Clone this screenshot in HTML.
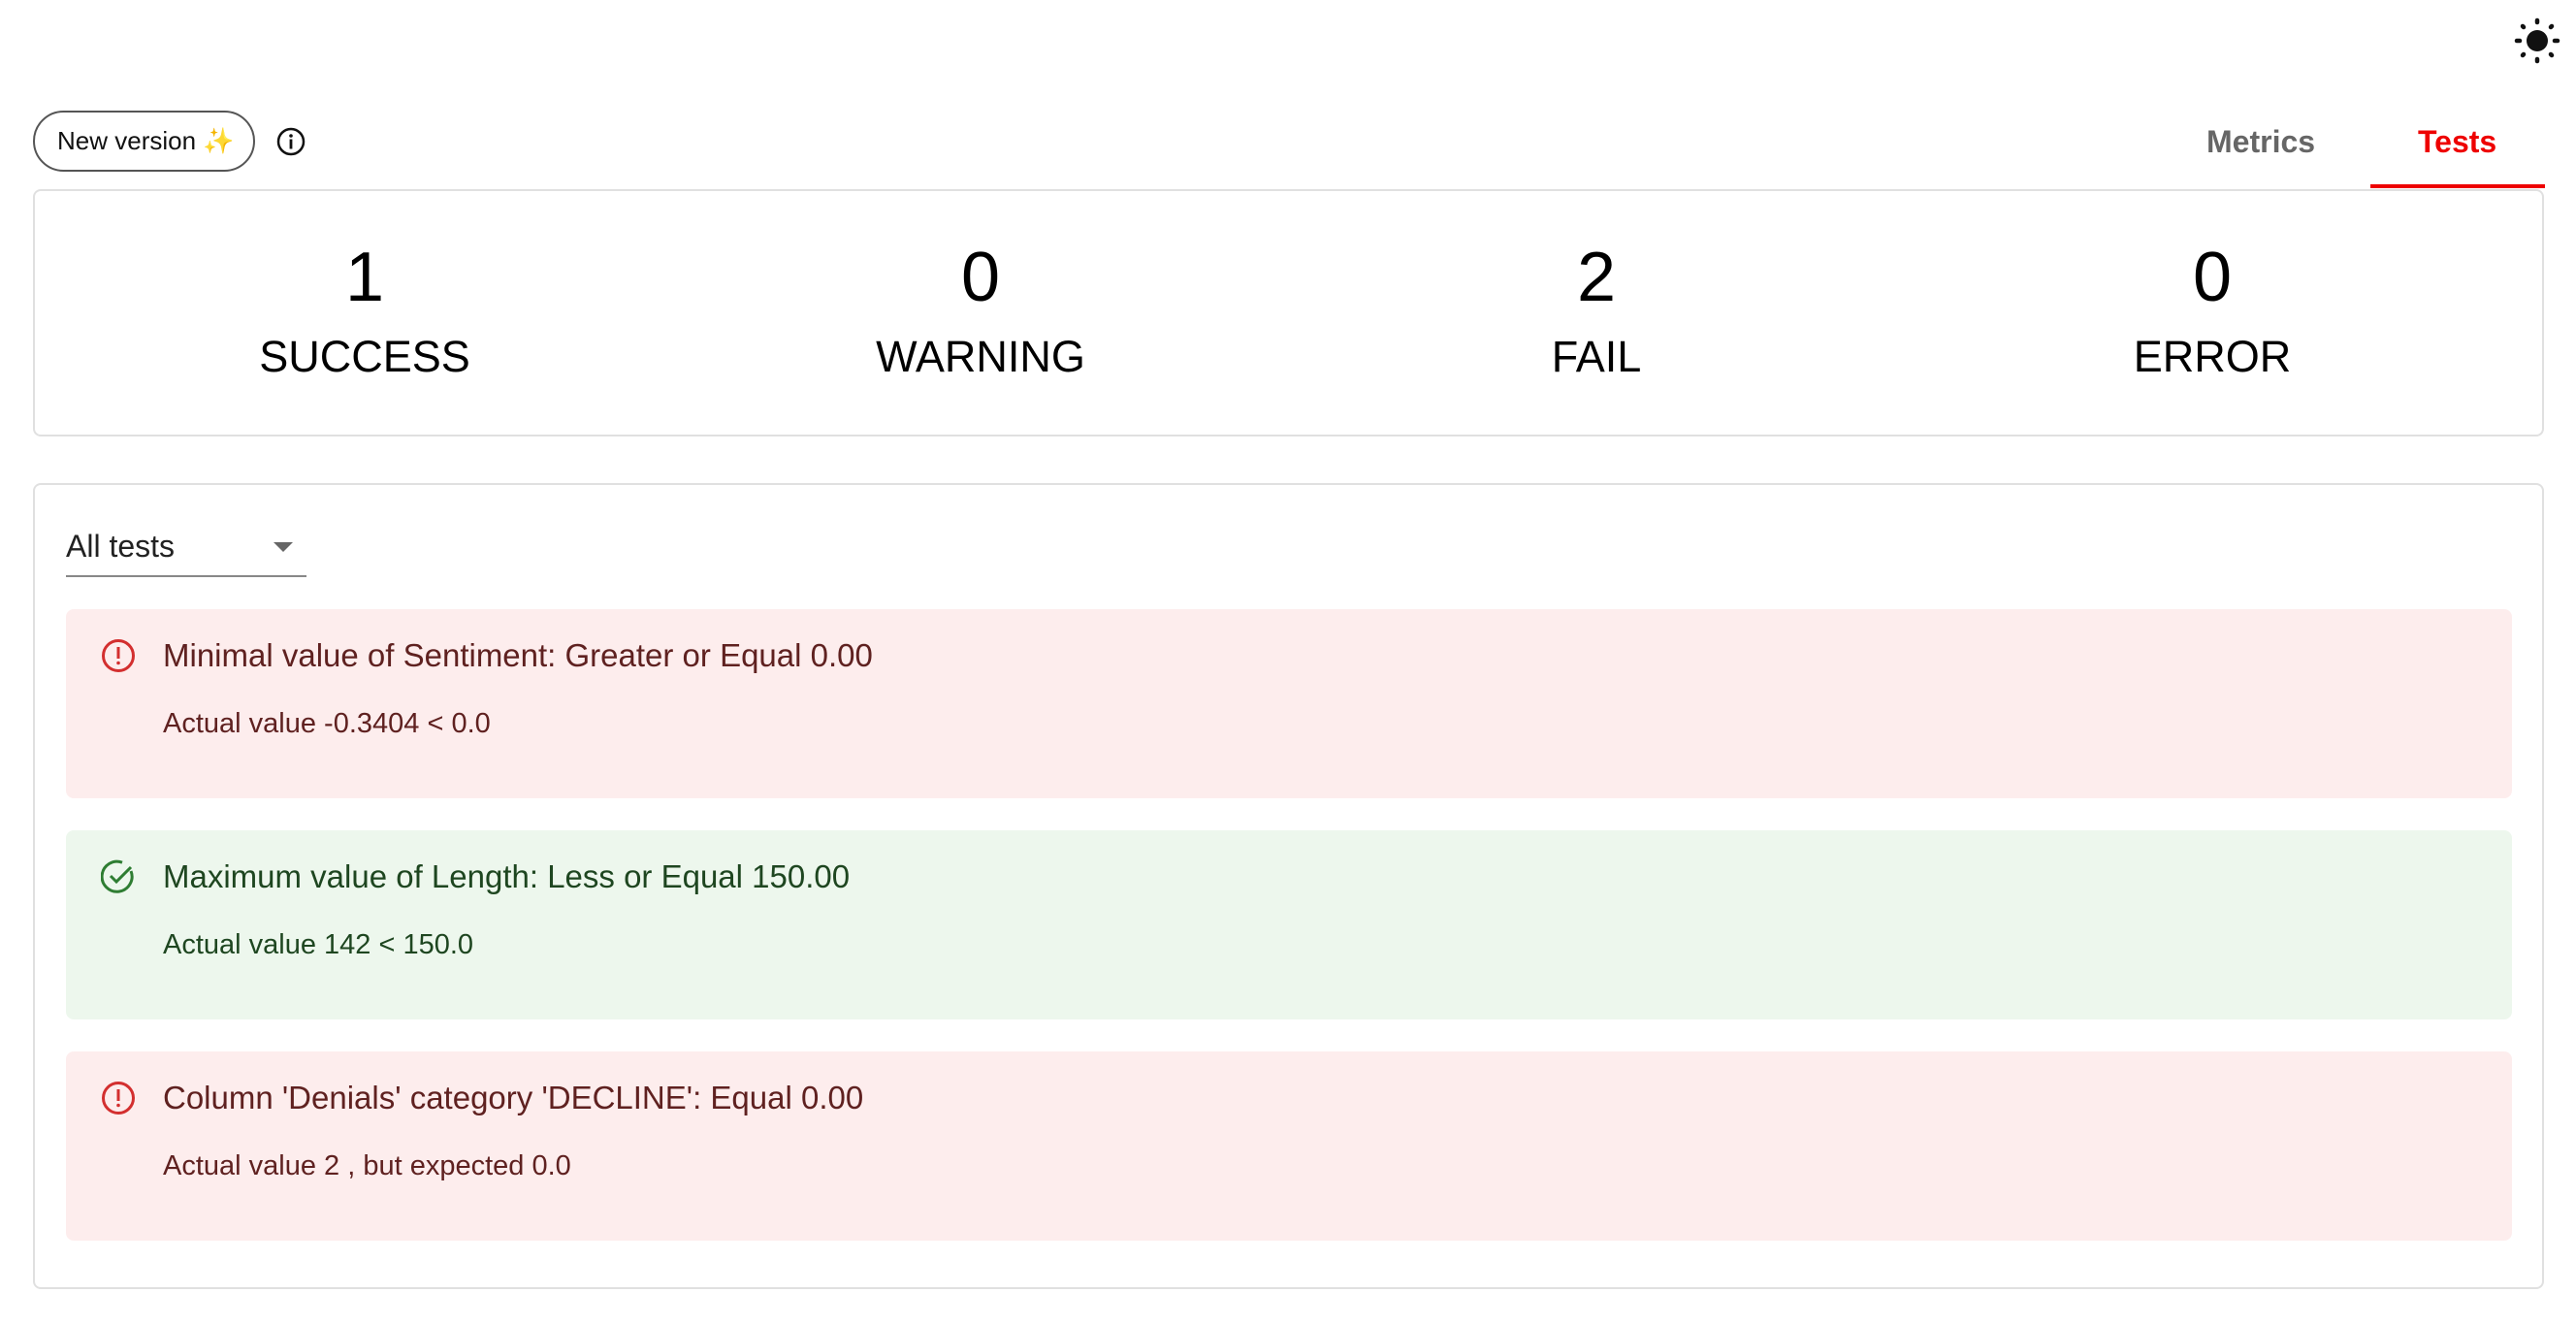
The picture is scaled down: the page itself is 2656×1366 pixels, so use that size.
<!DOCTYPE html>
<html><head><meta charset="utf-8"><style>
*{box-sizing:border-box;margin:0;padding:0}
body{width:2656px;height:1366px;background:#fff;font-family:"Liberation Sans",Arial,sans-serif;position:relative;overflow:hidden;color:#000}
.abs{position:absolute}
.btn{left:34px;top:114px;width:229px;height:63px;border:2px solid #555;border-radius:32px;font-size:26px;line-height:59px;padding-left:23px;color:#111}
.card{border:2px solid #e0e0e0;border-radius:8px;left:34px;width:2589px}
.stat{position:absolute;width:400px;margin-left:-200px;text-align:center}
.num{font-size:72px;top:245px}
.lbl{font-size:45px;top:342px}
.alert{position:absolute;left:68px;width:2522px;height:195px;border-radius:8px}
.alert .t{position:absolute;left:100px;top:29px;font-size:33px}
.alert .s{position:absolute;left:100px;top:102px;font-size:29px}
.alert svg{position:absolute;left:36px;top:30px}
.r{background:#fdeded;color:#5f2120}
.g{background:#edf7ed;color:#1e4620}
</style></head><body>
<svg class="abs" style="left:2592px;top:18px" width="48" height="48" viewBox="0 0 48 48"><circle cx="24" cy="24" r="11" fill="#111"/><g stroke="#111" stroke-width="4.5" stroke-linecap="round"><line x1="24" y1="3" x2="24" y2="5"/><line x1="24" y1="43" x2="24" y2="45"/><line x1="3" y1="24" x2="6" y2="24"/><line x1="42" y1="24" x2="45" y2="24"/><line x1="9" y1="9" x2="10" y2="10"/><line x1="38" y1="38" x2="39" y2="39"/><line x1="9" y1="39" x2="10" y2="38"/><line x1="38" y1="10" x2="39" y2="9"/></g></svg>
<div class="abs btn">New version <span style="color:#f5c518">✨</span></div>
<svg class="abs" style="left:285px;top:131px" width="30" height="30" viewBox="0 0 30 30"><circle cx="15" cy="15" r="13" fill="none" stroke="#111" stroke-width="2.5"/><circle cx="15" cy="9" r="1.8" fill="#111"/><rect x="13.6" y="12.5" width="2.8" height="10" fill="#111"/></svg>
<div class="abs" style="left:2275px;top:128px;font-size:32px;font-weight:bold;color:#666">Metrics</div>
<div class="abs" style="left:2493px;top:128px;font-size:32px;font-weight:bold;color:#e00">Tests</div>
<div class="abs" style="left:2444px;top:190px;width:180px;height:4px;background:#e00"></div>
<div class="abs card" style="top:195px;height:255px"></div>
<div class="stat num" style="left:376px">1</div><div class="stat lbl" style="left:376px">SUCCESS</div>
<div class="stat num" style="left:1011px">0</div><div class="stat lbl" style="left:1011px">WARNING</div>
<div class="stat num" style="left:1646px">2</div><div class="stat lbl" style="left:1646px">FAIL</div>
<div class="stat num" style="left:2281px">0</div><div class="stat lbl" style="left:2281px">ERROR</div>
<div class="abs card" style="top:498px;height:831px"></div>
<div class="abs" style="left:68px;top:545px;font-size:32px;color:#222">All tests</div>
<div class="abs" style="left:282px;top:559px;width:0;height:0;border-left:10px solid transparent;border-right:10px solid transparent;border-top:10px solid #666"></div>
<div class="abs" style="left:68px;top:593px;width:248px;height:2px;background:#888"></div>
<div class="alert r" style="top:628px"><svg width="36" height="36" viewBox="0 0 36 36"><circle cx="18" cy="18" r="15.5" fill="none" stroke="#d32f2f" stroke-width="3"/><rect x="16.5" y="9" width="3" height="12" fill="#d32f2f"/><circle cx="18" cy="25.5" r="1.8" fill="#d32f2f"/></svg><div class="t">Minimal value of Sentiment: Greater or Equal 0.00</div><div class="s">Actual value -0.3404 &lt; 0.0</div></div>
<div class="alert g" style="top:856px"><svg width="36" height="36" viewBox="0 0 36 36"><path d="M31 12A15.5 15.5 0 1 1 22 3.2" fill="none" stroke="#2e7d32" stroke-width="3"/><path d="M10 17l6 6L31 8" fill="none" stroke="#2e7d32" stroke-width="3"/></svg><div class="t">Maximum value of Length: Less or Equal 150.00</div><div class="s">Actual value 142 &lt; 150.0</div></div>
<div class="alert r" style="top:1084px"><svg width="36" height="36" viewBox="0 0 36 36"><circle cx="18" cy="18" r="15.5" fill="none" stroke="#d32f2f" stroke-width="3"/><rect x="16.5" y="9" width="3" height="12" fill="#d32f2f"/><circle cx="18" cy="25.5" r="1.8" fill="#d32f2f"/></svg><div class="t">Column 'Denials' category 'DECLINE': Equal 0.00</div><div class="s">Actual value 2 , but expected 0.0</div></div>
</body></html>
